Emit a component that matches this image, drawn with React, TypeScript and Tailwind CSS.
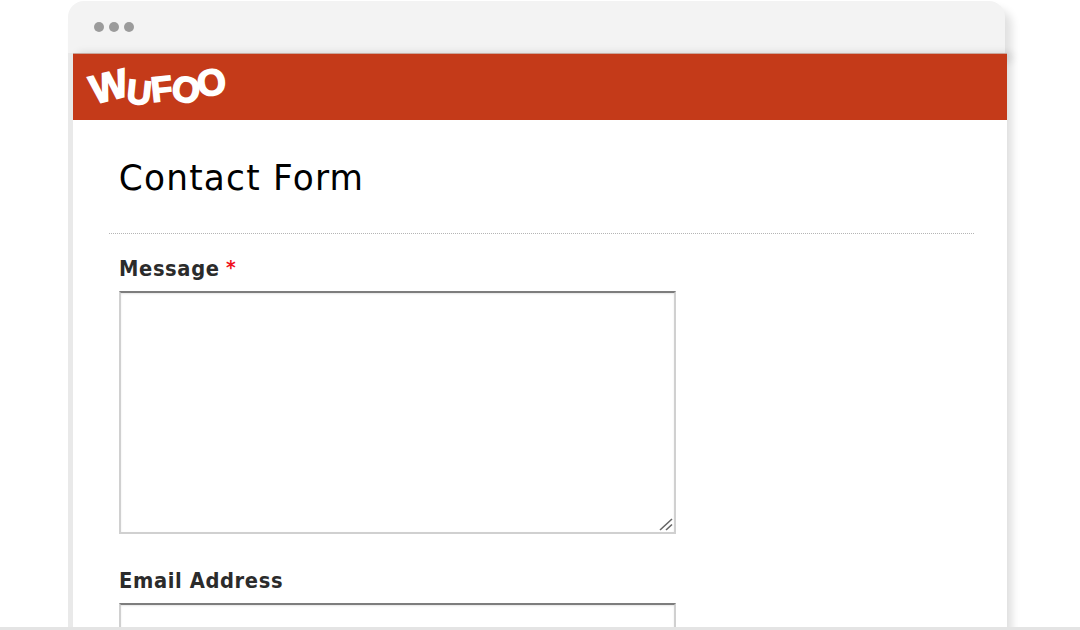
const logoLetters = [
  { ch: 'W', cls: 'text-[40px] -rotate-[14deg] -mr-[1px] translate-y-[-1px]' },
  { ch: 'U', cls: 'text-[34px] rotate-[6deg] mr-[0px] translate-y-[5px]' },
  { ch: 'F', cls: 'text-[35px] -rotate-[6deg] -mr-[1px] translate-y-[1px]' },
  { ch: 'O', cls: 'text-[36px] rotate-[8deg] -mr-[3px] translate-y-[3px]' },
  { ch: 'O', cls: 'text-[37px] -rotate-[8deg] -translate-y-[5px]' },
];

function Logo() {
  return (
    <div className="flex items-center font-['Liberation_Sans',sans-serif] font-bold leading-none text-white [-webkit-text-stroke:1.6px_white]">
      {logoLetters.map((l, i) => (
        <span key={i} className={`inline-block ${l.cls}`}>
          {l.ch}
        </span>
      ))}
    </div>
  );
}

function Field({ label, required, children }: { label: string; required?: boolean; children: React.ReactNode }) {
  return (
    <div>
      <div className="flex h-[24px] items-start text-[21px] leading-[24px] font-bold tracking-[0.65px] text-[#2b2b2b] scale-x-[0.93] origin-left whitespace-nowrap">
        {label}
        {required && <span className="ml-[7px] -mt-[2px] text-[20px] text-[#f01020]">*</span>}
      </div>
      {children}
    </div>
  );
}

function ResizeGrip() {
  return (
    <svg className="absolute right-[1px] bottom-[1px]" width="14" height="14" viewBox="0 0 14 14">
      <path d="M1 13 L13 2 M7 13 L13 7.5" stroke="#666" strokeWidth="1.6" fill="none" />
    </svg>
  );
}

export default function App() {
  return (
    <div className="flex h-[630px] w-[1080px] flex-col overflow-hidden bg-white font-['DejaVu_Sans',sans-serif]">
      <div className="flex-1 overflow-hidden pt-[1px] pl-[68px]">
        <div className="flex h-[52px] w-[937px] items-center gap-[5px] rounded-t-[16px] bg-[#f3f3f3] pl-[26px] pb-[1px] shadow-[7px_8px_8px_rgba(0,0,0,0.12)]">
          <span className="h-[10px] w-[10px] rounded-full bg-[#9b9b9b]" />
          <span className="h-[10px] w-[10px] rounded-full bg-[#9b9b9b]" />
          <span className="h-[10px] w-[10px] rounded-full bg-[#9b9b9b]" />
        </div>
        <div className="relative ml-[5px] h-[600px] w-[934px] bg-white shadow-[-5px_0_0_0_#e9e9e9,5px_0_8px_rgba(0,0,0,0.13)]">
          <div className="flex h-[67px] items-center border-t border-[#c9a79d] bg-[#c43a19] pl-[17px]">
            <Logo />
          </div>
          <div className="px-[36px]">
            <div className="pt-[36px] pb-[32px] pl-[10px] text-[35px] leading-[45px] tracking-[1.25px] text-black scale-x-[0.98] origin-left whitespace-nowrap">
              Contact Form
            </div>
            <div className="w-[865px] border-t border-dotted border-[#b5b5b5]" />
            <div className="pt-[23px] pl-[10px]">
              <Field label="Message" required>
                <div className="relative mt-[10px] h-[243px] w-[557px] border-2 border-[#d0d0d0] border-t-[#7d7d7d] shadow-[inset_0_1px_2px_rgba(0,0,0,0.1)]">
                  <ResizeGrip />
                </div>
              </Field>
              <div className="mt-[35px]">
                <Field label="Email Address">
                  <div className="mt-[10px] h-[40px] w-[557px] border-2 border-[#d0d0d0] border-t-[#7d7d7d] shadow-[inset_0_1px_2px_rgba(0,0,0,0.1)]" />
                </Field>
              </div>
            </div>
          </div>
        </div>
      </div>
      <div className="h-[3px] bg-[#e4e4e4]" />
    </div>
  );
}
